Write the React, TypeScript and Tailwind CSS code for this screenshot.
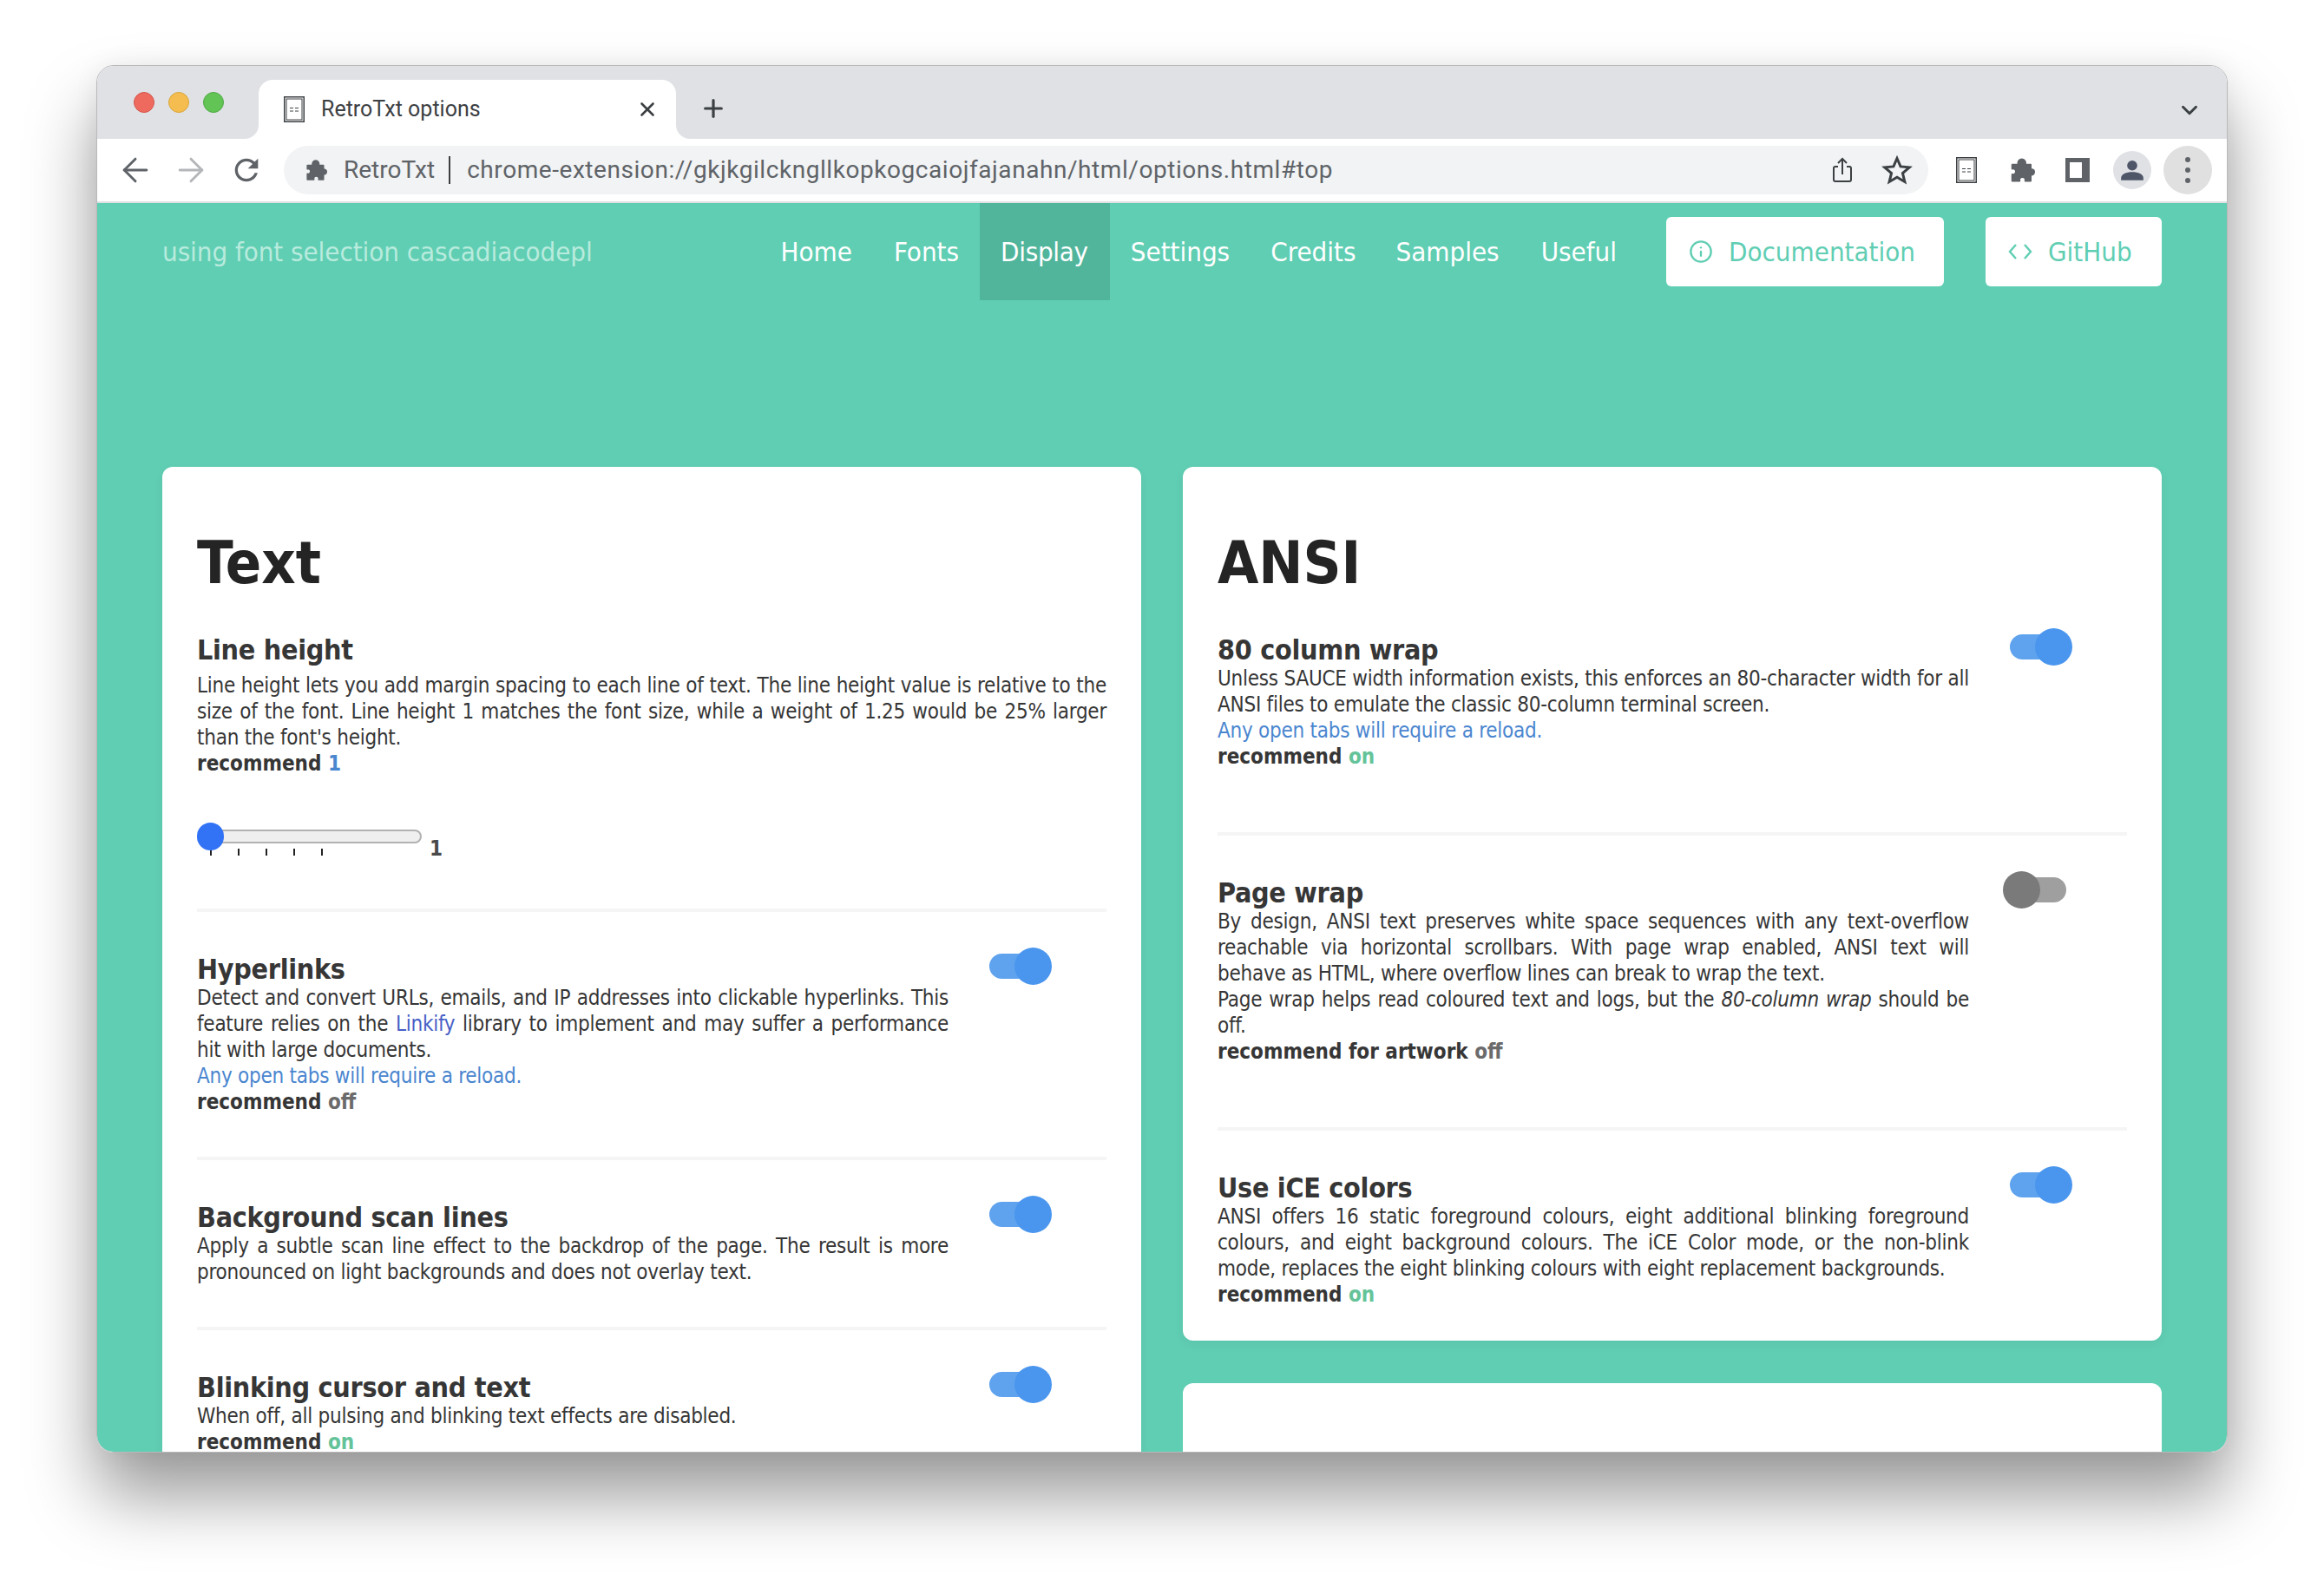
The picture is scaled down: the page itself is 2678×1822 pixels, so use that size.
import React from 'react';
import { ChevronDown, ArrowLeft, ArrowRight, Info, Plus, X } from 'lucide-react';

const reloadPath =
  'M17.65 6.35C16.2 4.9 14.21 4 12 4c-4.42 0-7.99 3.58-7.99 8s3.57 8 7.99 8c3.73 0 6.84-2.55 7.73-6h-2.08c-.82 2.33-3.04 4-5.65 4-3.31 0-6-2.69-6-6s2.69-6 6-6c1.66 0 3.14.69 4.22 1.78L13 11h7V4l-2.35 2.35z';

const navLinks = [
  { label: 'Home', className: 'ml-0' },
  { label: 'Fonts', className: 'ml-[48px]' },
  { label: 'Display', className: 'ml-[24px] bg-[#51b59c] pl-[24px] pr-[25px] tracking-[-0.3px]' },
  { label: 'Settings', className: 'ml-[24px]' },
  { label: 'Credits', className: 'ml-[47px]' },
  { label: 'Samples', className: 'ml-[46px]' },
  { label: 'Useful', className: 'ml-[48px]' },
];

function PuzzleIcon({ className }: { className: string }) {
  return (
    <svg viewBox="0 0 24 24" className={className} fill="#5f6368" stroke="#5f6368" strokeWidth="1.6" strokeLinejoin="round">
      <path d="M3 7h5.6C8 4.6 9 2 11.8 2s3.8 2.6 3.2 5H20v4.6c2-.6 3.4.6 3.2 2.4-.2 1.8-1.4 2.8-3.2 2.2V22h-5c.6-2-.4-3.6-2.6-3.6S9.2 20 9.8 22H3v-6c1.8.6 3.4-.6 3.4-2.6S4.8 10.2 3 10.8z" />
    </svg>
  );
}

function PageIcon({ className }: { className: string }) {
  return (
    <svg viewBox="0 0 24 30" className={className} fill="none" stroke="#3c4043">
      <rect x="0.75" y="0.75" width="22.5" height="28.5" strokeWidth="1.5" />
      <rect x="3" y="3" width="18" height="24" strokeWidth="1" />
      <path d="M7 13.5h4M13 13.5h4M7 17h4M13 17h4" strokeWidth="1.2" />
    </svg>
  );
}

function Toggle({ on = true }: { on?: boolean }) {
  if (on) {
    return (
      <div className="flex items-center h-[43px]">
        <div className="w-[60px] h-[29px] rounded-full bg-[#5fa3ee]" />
        <div className="w-[43px] h-[43px] rounded-full bg-[#4a96ee] -ml-[31px]" />
      </div>
    );
  }
  return (
    <div className="flex items-center h-[43px] -ml-[8px]">
      <div className="w-[43px] h-[43px] rounded-full bg-[#7a7a7a] z-10" />
      <div className="w-[60px] h-[29px] rounded-full bg-[#9f9f9f] -ml-[30px]" />
    </div>
  );
}

function Heading({ children }: { children: React.ReactNode }) {
  return (
    <h3 className="pt-[1px] text-[32px] leading-[35px] font-bold tracking-[-0.3px] text-[#363636]">{children}</h3>
  );
}

function Row({
  title,
  children,
  on = true,
  className = 'pb-[48px]',
}: {
  title: string;
  children: React.ReactNode;
  on?: boolean;
  className?: string;
}) {
  return (
    <div className={`flex pt-[48px] ${className}`}>
      <div className="w-[866px]">
        <Heading>{title}</Heading>
        <div className="text-justify tracking-[-0.25px]">{children}</div>
      </div>
      <div className="ml-[47px] -mt-[7px]">
        <Toggle on={on} />
      </div>
    </div>
  );
}

function Divider() {
  return <div className="h-[4px] bg-[#f5f5f5]" />;
}

function Recommend({ children }: { children: React.ReactNode }) {
  return <p className="font-bold text-left tracking-normal">{children}</p>;
}

const reload = <p className="text-[#4a86cf] text-left">Any open tabs will require a reload.</p>;

export default function App() {
  return (
    <div className="h-[1822px] w-[2678px] overflow-hidden bg-white pt-[75px] pl-[111px] font-['DejaVu_Sans_Condensed','DejaVu_Sans',sans-serif] [font-stretch:condensed]">
      <div className="w-[2456px] h-[1599px] rounded-[20px] overflow-hidden flex flex-col border border-[#b9b9b9] shadow-[0_50px_80px_rgba(0,0,0,0.4),0_0_30px_rgba(0,0,0,0.06)]">
        {/* tab strip */}
        <div className="h-[84px] shrink-0 bg-[#dfe1e5] flex font-['Roboto',sans-serif] [font-stretch:normal]">
          <div className="flex items-center gap-[16px] ml-[42px]">
            <div className="w-[24px] h-[24px] rounded-full bg-[#ee6a5f] border border-[#d5564c]" />
            <div className="w-[24px] h-[24px] rounded-full bg-[#f5bd4f] border border-[#d9a63c]" />
            <div className="w-[24px] h-[24px] rounded-full bg-[#61c454] border border-[#52a946]" />
          </div>
          <div className="relative ml-[40px] mt-[16px] w-[481px] h-[68px] bg-white rounded-t-[16px] flex items-center pl-[29px] pr-[20px]">
            <svg viewBox="0 0 16 16" className="absolute bottom-0 -left-[16px] w-[16px] h-[16px] fill-white">
              <path d="M16 0v16H0A16 16 0 0 0 16 0z" />
            </svg>
            <svg viewBox="0 0 16 16" className="absolute bottom-0 -right-[16px] w-[16px] h-[16px] fill-white">
              <path d="M0 0v16h16A16 16 0 0 1 0 0z" />
            </svg>
            <PageIcon className="w-[24px] h-[30px] shrink-0" />
            <span className="ml-[19px] text-[25px] text-[#3c4043]">RetroTxt options</span>
            <X className="ml-auto w-[26px] h-[26px] text-[#3c4043]" strokeWidth={2.4} />
          </div>
          <Plus className="ml-[27px] mt-[33px] w-[32px] h-[32px] text-[#3c4043]" strokeWidth={2.4} />
          <ChevronDown className="ml-auto mr-[28px] mt-[36px] w-[30px] h-[30px] text-[#3c4043]" strokeWidth={2.4} />
        </div>

        {/* toolbar */}
        <div className="h-[74px] shrink-0 bg-white border-b-2 border-[#dfe1e5] flex items-center text-[#5f6368] font-['Roboto',sans-serif] [font-stretch:normal]">
          <ArrowLeft className="ml-[22px] w-[44px] h-[44px]" strokeWidth={1.6} />
          <ArrowRight className="ml-[20px] w-[44px] h-[44px] text-[#b4b6b9]" strokeWidth={1.6} />
          <svg viewBox="0 0 24 24" className="ml-[22px] w-[40px] h-[40px] fill-[#5f6368]">
            <path d={reloadPath} />
          </svg>
          <div className="ml-[23px] w-[1895px] h-[56px] rounded-full bg-[#f1f3f4] flex items-center pl-[24px] pr-[18px] text-[28px]">
            <PuzzleIcon className="w-[26px] h-[26px]" />
            <span className="ml-[19px]">RetroTxt</span>
            <span className="ml-[16px] w-[2px] h-[32px] bg-[#3c4043]" />
            <span className="ml-[19px] tracking-[0.56px]">
              chrome-extension://gkjkgilckngllkopkogcaiojfajanahn/html/options.html#top
            </span>
            <svg viewBox="0 0 24 30" className="ml-auto w-[24px] h-[30px] fill-none stroke-[#3c4043]" strokeWidth="2">
              <path d="M12 20V2M7 7l5-5 5 5M7 11H4a2 2 0 0 0-2 2v13a2 2 0 0 0 2 2h16a2 2 0 0 0 2-2V13a2 2 0 0 0-2-2h-3" />
            </svg>
            <svg viewBox="0 0 24 24" className="ml-[33px] w-[36px] h-[36px] fill-none stroke-[#3c4043]" strokeWidth="2">
              <path d="M12 3l2.7 6.3 6.8.6-5.2 4.5 1.6 6.6L12 17.5 6.1 21l1.6-6.6L2.5 9.9l6.8-.6z" />
            </svg>
          </div>
          <PageIcon className="ml-[32px] w-[24px] h-[30px]" />
          <PuzzleIcon className="ml-[37px] w-[30px] h-[30px]" />
          <div className="ml-[35px] w-[28px] h-[28px] bg-[#5f6368] pl-[5px] py-[5px] pr-[9px]">
            <div className="w-full h-full bg-white" />
          </div>
          <div className="ml-[27px] w-[44px] h-[44px] rounded-full bg-[#dfe1e5] flex items-center justify-center">
            <svg viewBox="0 0 24 24" className="w-[28px] h-[28px] fill-[#4f5668]">
              <circle cx="12" cy="7.5" r="5" />
              <path d="M1 22v-2c0-4 5-6 11-6s11 2 11 6v2z" />
            </svg>
          </div>
          <div className="ml-[14px] w-[56px] h-[56px] rounded-full bg-[#e0e0e0] flex flex-col items-center justify-center gap-[6px]">
            <span className="w-[6px] h-[6px] rounded-full bg-[#5f6368]" />
            <span className="w-[6px] h-[6px] rounded-full bg-[#5f6368]" />
            <span className="w-[6px] h-[6px] rounded-full bg-[#5f6368]" />
          </div>
        </div>

        {/* page */}
        <div className="flex-1 min-h-0 overflow-hidden bg-[#60ceb3] px-[75px]">
          <nav className="h-[112px] flex items-center text-white text-[31px]">
            <span className="text-[#b8ebdd] tracking-[-0.05px]">using font selection cascadiacodepl</span>
            <div className="ml-auto flex items-center h-full">
              {navLinks.map((link) => (
                <a key={link.label} className={`h-full flex items-center ${link.className}`}>
                  {link.label}
                </a>
              ))}
              <a className="ml-[57px] w-[320px] h-[80px] rounded-[6px] bg-white text-[#60ceb3] flex items-center pl-[26px]">
                <Info className="w-[28px] h-[28px]" strokeWidth={2} />
                <span className="ml-[18px]">Documentation</span>
              </a>
              <a className="ml-[48px] w-[203px] h-[80px] rounded-[6px] bg-white text-[#60ceb3] flex items-center pl-[26px]">
                <svg viewBox="0 0 28 24" className="w-[28px] h-[24px] fill-none stroke-[#60ceb3]" strokeWidth="2.4">
                  <path d="M9 4l-7 8 7 8M19 4l7 8-7 8" />
                </svg>
                <span className="ml-[18px]">GitHub</span>
              </a>
            </div>
          </nav>

          <div className="mt-[192px] flex gap-[48px] items-start text-[#363636] text-[24px] leading-[30px]">
            {/* Text card */}
            <div className="w-[1128px] shrink-0 rounded-[12px] bg-white px-[40px] pt-[75px] shadow-[0_4px_12px_rgba(0,0,0,0.05)]">
              <h1 className="text-[68px] leading-[72px] font-bold text-[#242424]">Text</h1>
              <div className="mt-[46px]">
                <Heading>Line height</Heading>
                <div className="mt-[8px] text-justify tracking-[-0.25px]">
                  <p>
                    Line height lets you add margin spacing to each line of text. The line height value is relative to
                    the size of the font. Line height 1 matches the font size, while a weight of 1.25 would be 25%
                    larger than the font's height.
                  </p>
                  <Recommend>
                    recommend <span className="text-[#4a86cf]">1</span>
                  </Recommend>
                </div>
                <div className="mt-[53px] flex items-start h-[99px]">
                  <div className="w-[259px]">
                    <div className="flex items-center h-[32px]">
                      <div className="w-[31px] h-[32px] rounded-full bg-[#3273f6] z-10" />
                      <div className="w-[244px] -ml-[16px] h-[16px] rounded-full bg-[#efefef] border-2 border-[#b2b2b2]" />
                    </div>
                    <div className="flex gap-[30px] pl-[15px] -mt-[2px]">
                      {[0, 1, 2, 3, 4].map((tick) => (
                        <span key={tick} className="w-[2px] h-[8px] bg-[#222]" />
                      ))}
                    </div>
                  </div>
                  <span className="ml-[9px] mt-[15px] font-bold text-[#4a4a4a]">1</span>
                </div>
              </div>
              <Divider />
              <Row title="Hyperlinks">
                <p>
                  Detect and convert URLs, emails, and IP addresses into clickable hyperlinks. This feature relies on
                  the <a className="text-[#485fc7]">Linkify</a> library to implement and may suffer a performance hit
                  with large documents.
                </p>
                {reload}
                <Recommend>
                  recommend <span className="text-[#6b6b6b]">off</span>
                </Recommend>
              </Row>
              <Divider />
              <Row title="Background scan lines">
                <p>
                  Apply a subtle scan line effect to the backdrop of the page. The result is more pronounced on light
                  backgrounds and does not overlay text.
                </p>
              </Row>
              <Divider />
              <Row title="Blinking cursor and text">
                <p>When off, all pulsing and blinking text effects are disabled.</p>
                <Recommend>
                  recommend <span className="text-[#65c39a]">on</span>
                </Recommend>
              </Row>
            </div>

            {/* ANSI card */}
            <div className="flex-1 flex flex-col gap-[49px]">
              <div className="rounded-[12px] bg-white px-[40px] pt-[75px] pb-[38px] shadow-[0_4px_12px_rgba(0,0,0,0.05)]">
                <h1 className="text-[68px] leading-[72px] font-bold text-[#242424]">ANSI</h1>
                <Row title="80 column wrap" className="pb-[72px] -mt-[2px]">
                  <p>
                    Unless SAUCE width information exists, this enforces an 80-character width for all ANSI files to
                    emulate the classic 80-column terminal screen.
                  </p>
                  {reload}
                  <Recommend>
                    recommend <span className="text-[#65c39a]">on</span>
                  </Recommend>
                </Row>
                <Divider />
                <Row title="Page wrap" on={false} className="pb-[72px]">
                  <p>
                    By design, ANSI text preserves white space sequences with any text-overflow reachable via
                    horizontal scrollbars. With page wrap enabled, ANSI text will behave as HTML, where overflow lines
                    can break to wrap the text.
                  </p>
                  <p>
                    Page wrap helps read coloured text and logs, but the <em>80-column wrap</em> should be off.
                  </p>
                  <Recommend>
                    recommend for artwork <span className="text-[#6b6b6b]">off</span>
                  </Recommend>
                </Row>
                <Divider />
                <Row title="Use iCE colors" className="pb-0">
                  <p>
                    ANSI offers 16 static foreground colours, eight additional blinking foreground colours, and eight
                    background colours. The iCE Color mode, or the non-blink mode, replaces the eight blinking colours
                    with eight replacement backgrounds.
                  </p>
                  <Recommend>
                    recommend <span className="text-[#65c39a]">on</span>
                  </Recommend>
                </Row>
              </div>
              <div className="h-[300px] rounded-[12px] bg-white" />
            </div>
          </div>
        </div>
      </div>
    </div>
  );
}
